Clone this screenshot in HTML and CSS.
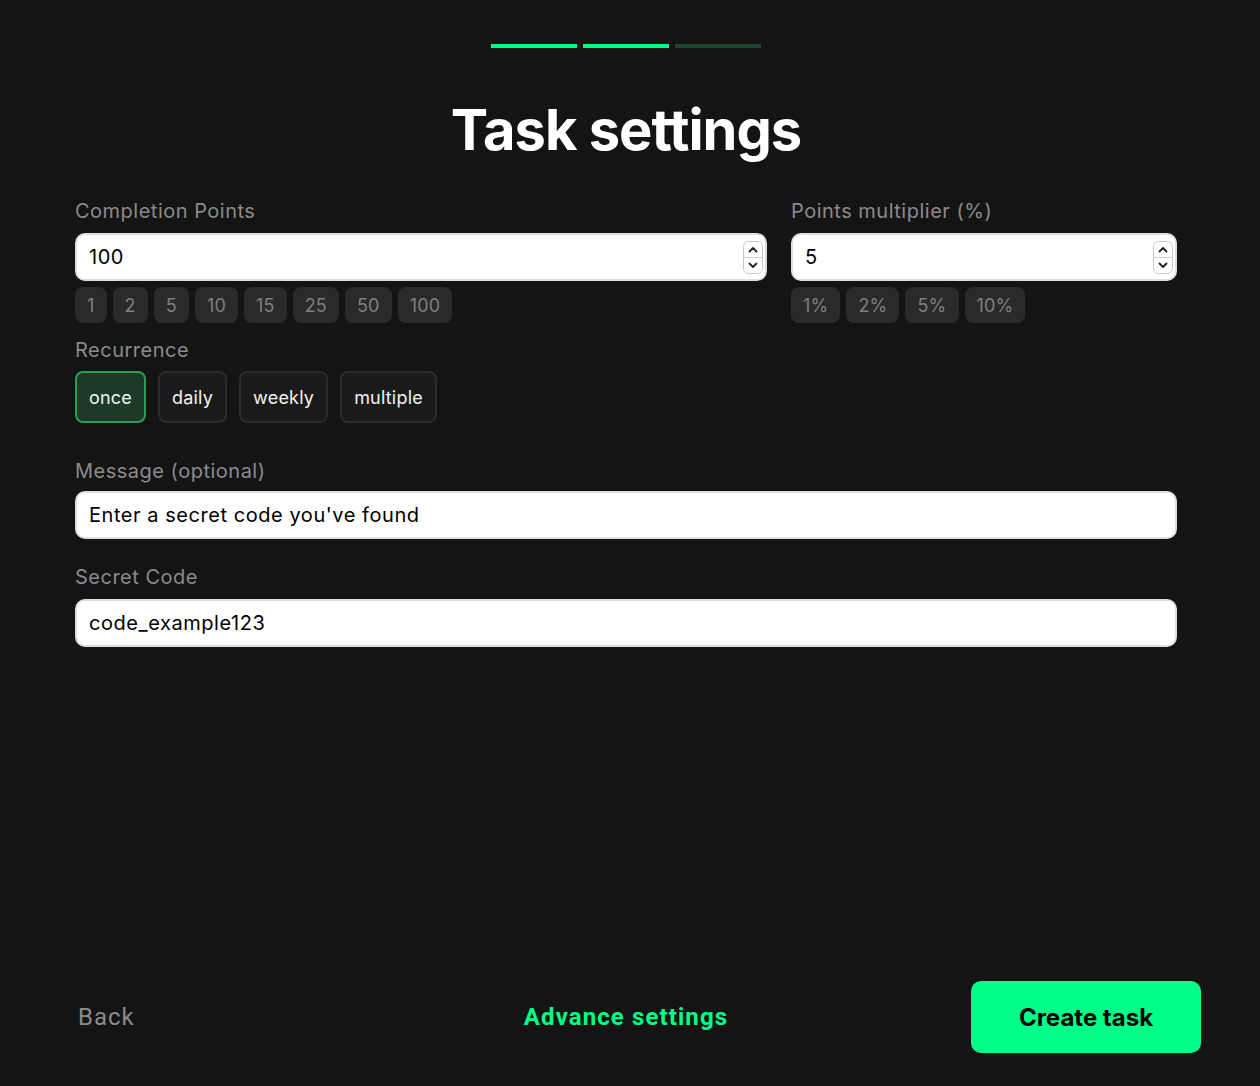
FILE: index.html
```html
<!DOCTYPE html>
<html lang="en">
<head>
    <meta charset="UTF-8">
    <meta name="viewport" content="width=device-width, initial-scale=1.0">
    <title>Task settings</title>
    <link rel="stylesheet" href="styles.css">
</head>
<body>
    <div class="app">
        <div class="steps">
            <span class="step done"></span>
            <span class="step done"></span>
            <span class="step"></span>
        </div>

        <h1 class="title">Task settings</h1>

        <form class="task-form">
            <div class="row">
                <div class="field">
                    <label>Completion Points</label>
                    <div class="number-box">
                        <input type="text" value="100">
                        <span class="stepper">
                            <svg width="20" height="33" viewBox="0 0 20 33">
                                <rect x="0.5" y="0.5" width="19" height="32" rx="5" fill="#fff" stroke="#c9c9c9"/>
                                <line x1="1" y1="16.5" x2="19" y2="16.5" stroke="#d4d4d4"/>
                                <path d="M6.5 10.5 L10 7 L13.5 10.5" fill="none" stroke="#222" stroke-width="1.8" stroke-linecap="round" stroke-linejoin="round"/>
                                <path d="M6.5 22.5 L10 26 L13.5 22.5" fill="none" stroke="#222" stroke-width="1.8" stroke-linecap="round" stroke-linejoin="round"/>
                            </svg>
                        </span>
                    </div>
                    <div class="chips">
                        <span class="chip">1</span>
                        <span class="chip">2</span>
                        <span class="chip">5</span>
                        <span class="chip">10</span>
                        <span class="chip">15</span>
                        <span class="chip">25</span>
                        <span class="chip">50</span>
                        <span class="chip">100</span>
                    </div>
                </div>
                <div class="field">
                    <label>Points multiplier (%)</label>
                    <div class="number-box">
                        <input type="text" value="5">
                        <span class="stepper">
                            <svg width="20" height="33" viewBox="0 0 20 33">
                                <rect x="0.5" y="0.5" width="19" height="32" rx="5" fill="#fff" stroke="#c9c9c9"/>
                                <line x1="1" y1="16.5" x2="19" y2="16.5" stroke="#d4d4d4"/>
                                <path d="M6.5 10.5 L10 7 L13.5 10.5" fill="none" stroke="#222" stroke-width="1.8" stroke-linecap="round" stroke-linejoin="round"/>
                                <path d="M6.5 22.5 L10 26 L13.5 22.5" fill="none" stroke="#222" stroke-width="1.8" stroke-linecap="round" stroke-linejoin="round"/>
                            </svg>
                        </span>
                    </div>
                    <div class="chips">
                        <span class="chip">1%</span>
                        <span class="chip">2%</span>
                        <span class="chip">5%</span>
                        <span class="chip">10%</span>
                    </div>
                </div>
            </div>

            <div class="field recurrence">
                <label>Recurrence</label>
                <div class="options">
                    <button type="button" class="option active">once</button>
                    <button type="button" class="option">daily</button>
                    <button type="button" class="option">weekly</button>
                    <button type="button" class="option">multiple</button>
                </div>
            </div>

            <div class="field message">
                <label>Message (optional)</label>
                <input type="text" class="text-input" value="Enter a secret code you've found">
            </div>

            <div class="field">
                <label>Secret Code</label>
                <input type="text" class="text-input" value="code_example123">
            </div>
        </form>

        <div class="footer">
            <button type="button" class="back">Back</button>
            <button type="button" class="advanced">Advance settings</button>
            <button type="button" class="create">Create task</button>
        </div>
    </div>
</body>
</html>
```

FILE: styles.css
```css
        * {
            box-sizing: border-box;
        }
        body {
            margin: 0;
            background-color: #141414;
            font-family: Inter, "Noto Sans", sans-serif;
            color: #fff;
        }
        .app {
            width: 1252px;
            min-height: 1086px;
            padding-top: 44px;
            display: flex;
            flex-direction: column;
        }
        .steps {
            display: flex;
            justify-content: center;
            gap: 6px;
        }
        .step {
            width: 86px;
            height: 4px;
            background: #1d472c;
        }
        .step.done {
            background: #00ff88;
        }
        .title {
            margin: 49px 0 0;
            text-align: center;
            font-size: 56px;
            line-height: 67px;
            font-weight: 700;
            letter-spacing: -1px;
        }

        .task-form {
            width: 1102px;
            margin: 35px auto 0;
        }
        .row {
            display: grid;
            grid-template-columns: 1fr 386px;
            gap: 24px;
        }
        .field label {
            display: block;
            font-size: 20px;
            line-height: 24px;
            color: #8b8b8b;
            letter-spacing: 0.5px;
            margin-bottom: 10px;
        }
        .number-box,
        .text-input {
            height: 48px;
            background: #fff;
            border: 2px solid #dedede;
            border-radius: 10px;
        }
        .number-box {
            display: flex;
            align-items: center;
            padding-right: 2px;
        }
        .number-box input,
        .text-input {
            font-family: Inter, sans-serif;
            font-size: 20px;
            letter-spacing: 0.55px;
            color: #000;
            outline: none;
        }
        .number-box input {
            flex: 1;
            border: none;
            background: none;
            padding: 0 12px;
            height: 100%;
        }
        .stepper {
            display: flex;
        }
        .text-input {
            width: 100%;
            padding: 0 12px;
            display: block;
        }
        .chips {
            display: flex;
            gap: 6px;
            margin-top: 6px;
        }
        .chip {
            height: 36px;
            padding: 0 12px;
            border-radius: 8px;
            background: #2a2a2a;
            color: #7f7f7f;
            font-size: 18px;
            letter-spacing: 0.2px;
            display: flex;
            align-items: center;
        }

        .recurrence {
            margin-top: 15px;
        }
        .recurrence label {
            margin-bottom: 9px;
        }
        .options {
            display: flex;
            gap: 12px;
        }
        .option {
            height: 52px;
            padding: 0 12px;
            border: 2px solid #2b2b2b;
            border-radius: 8px;
            background: #1a1a1a;
            color: #f2f2f2;
            font-family: Inter, sans-serif;
            font-size: 18px;
            letter-spacing: 0.2px;
        }
        .option.active {
            background: #1d3a27;
            border-color: #2e9b56;
        }
        .message {
            margin-top: 36px;
            margin-bottom: 26px;
        }
        .message label {
            margin-bottom: 8px;
        }

        .footer {
            margin-top: auto;
            padding: 0 51px 33px;
            display: grid;
            grid-template-columns: 1fr auto 1fr;
            align-items: center;
        }
        .footer button {
            border: none;
            background: none;
            cursor: pointer;
            font-size: 24px;
        }
        .back {
            justify-self: start;
            padding: 0 27px;
            font-family: Roboto, sans-serif;
            letter-spacing: 1px;
            color: #8b8b8b;
        }
        .advanced {
            font-family: Roboto, sans-serif;
            font-weight: 700;
            letter-spacing: 1.1px;
            color: #00ff88;
        }
        .footer .create {
            justify-self: end;
            width: 230px;
            height: 72px;
            border-radius: 10px;
            background: #00ff88;
            color: #000;
            font-family: Inter, sans-serif;
            font-weight: 700;
        }
```
